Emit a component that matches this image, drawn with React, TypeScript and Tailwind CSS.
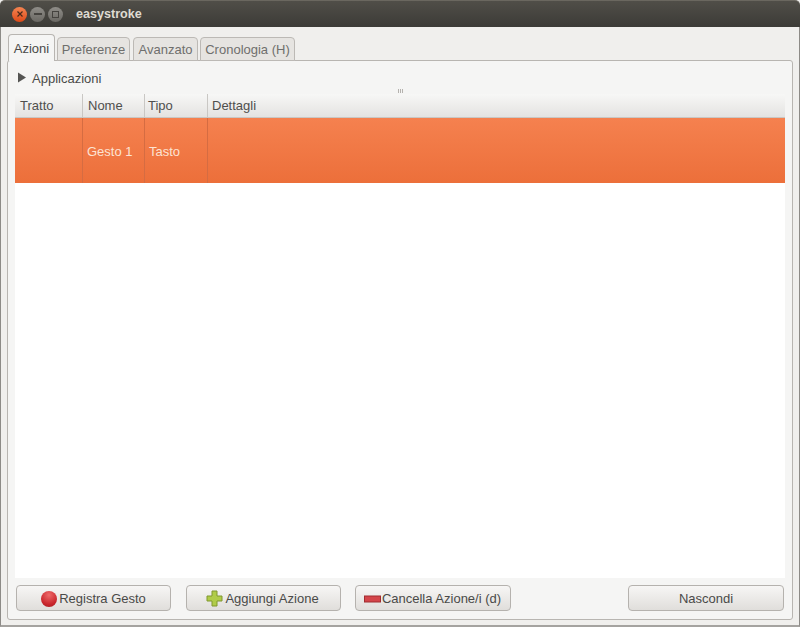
export default function App() {
  const font = "font-['Liberation_Sans',Arial,sans-serif]";
  const btn =
    "flex h-[26px] items-center justify-center rounded-[4px] border border-[#b5b2ae] bg-gradient-to-b from-[#f7f6f5] to-[#e0dedb] text-[13px] text-[#4a4a48]";
  return (
    <div className={`flex h-[627px] w-[800px] flex-col overflow-hidden bg-[#f0efed] ${font}`}>
      <div className="flex h-[27px] shrink-0 items-center rounded-t-[5px] border-t border-[#6a675f] bg-gradient-to-b from-[#504e48] to-[#3c3b37] pl-[12px]">
        <div className="flex h-[15px] w-[15px] items-center justify-center rounded-full bg-gradient-to-b from-[#f58450] to-[#dd4814]">
          <svg width="8" height="8" viewBox="0 0 8 8"><path d="M1.5 1.5l5 5M6.5 1.5l-5 5" stroke="#4a2a1a" strokeWidth="1.2" /></svg>
        </div>
        <div className="ml-[3px] flex h-[15px] w-[15px] items-center justify-center rounded-full bg-gradient-to-b from-[#8f8d88] to-[#6a6863]">
          <div className="h-[2px] w-[8px] bg-[#45433f]" />
        </div>
        <div className="ml-[3px] flex h-[15px] w-[15px] items-center justify-center rounded-full bg-gradient-to-b from-[#8f8d88] to-[#6a6863]">
          <div className="h-[7px] w-[7px] border border-[#45433f]" />
        </div>
        <div className="ml-[13px] text-[12.6px] font-bold text-[#dfdbd2]">easystroke</div>
      </div>
      <div className="flex min-h-0 flex-1 flex-col border-x border-b-2 border-x-[#8d8b87] border-b-[#a5a3a0] px-[6px] pt-[7px] pb-[5px]">
        <div className="z-10 -mb-px flex items-end pl-[1px] text-[13px]">
          <div className="flex h-[27px] w-[47px] items-center justify-center rounded-t-[4px] border border-b-0 border-[#b8b5b1] bg-[#f5f5f4] pt-[2px] text-[#4a4a48]">Azioni</div>
          <div className="ml-[2px] flex h-[24px] w-[73px] items-center justify-center rounded-t-[4px] border border-[#bcb9b5] bg-[#e6e4e1] pt-[2px] text-[#6f6f6d]">Preferenze</div>
          <div className="ml-[3px] flex h-[24px] w-[65px] items-center justify-center rounded-t-[4px] border border-[#bcb9b5] bg-[#e6e4e1] pt-[2px] text-[#6f6f6d]">Avanzato</div>
          <div className="ml-[2px] flex h-[24px] w-[95px] items-center justify-center rounded-t-[4px] border border-[#bcb9b5] bg-[#e6e4e1] pt-[2px] text-[#6f6f6d]">Cronologia (H)</div>
        </div>
        <div className="flex min-h-0 flex-1 flex-col rounded-[3px] border border-[#b8b5b1] bg-[#f5f5f4] px-[7px] pt-[9px] pb-[8px]">
          <div className="flex h-[17px] items-center pl-[3px] text-[13px] text-[#4a4a48]">
            <svg className="mb-[3px] -ml-[1px]" width="10" height="11" viewBox="0 0 10 11"><path d="M1 0.5L9 5.5L1 10.5Z" fill="#555553" /></svg>
            <span className="ml-[5px]">Applicazioni</span>
          </div>
          <div className="flex h-[7px] items-center justify-center gap-[1px]">
            <div className="h-[4px] w-px bg-[#b5b2ae]" />
            <div className="h-[4px] w-px bg-[#b5b2ae]" />
            <div className="h-[4px] w-px bg-[#b5b2ae]" />
          </div>
          <div className="flex min-h-0 flex-1 flex-col bg-white">
            <div className="flex h-[24px] shrink-0 border-b border-[#c9c7c4] bg-gradient-to-b from-[#f7f7f6] to-[#e4e3e1] text-[13px] text-[#4f4f4d]">
              <div className="flex w-[68px] items-center border-r border-[#c9c7c4] pt-[1px] pl-[5px]">Tratto</div>
              <div className="flex w-[62px] items-center border-r border-[#c9c7c4] pt-[1px] pl-[5px]">Nome</div>
              <div className="flex w-[63px] items-center border-r border-[#c9c7c4] pt-[1px] pl-[3px]">Tipo</div>
              <div className="flex flex-1 items-center pt-[1px] pl-[4px]">Dettagli</div>
            </div>
            <div className="flex h-[65px] shrink-0 bg-gradient-to-b from-[#f5814f] to-[#ec6f3a] text-[13px] text-[#fde3d3]">
              <div className="w-[68px] border-r border-[#d56c42]" />
              <div className="flex w-[62px] items-center border-r border-[#d56c42] pt-[2px] pl-[4px]">Gesto 1</div>
              <div className="flex w-[63px] items-center border-r border-[#d56c42] pt-[2px] pl-[4px]">Tasto</div>
              <div className="flex-1" />
            </div>
          </div>
          <div className="mt-[7px] flex shrink-0 px-[1px]">
            <div className={`${btn} w-[155px] gap-[2px] pt-[1px]`}>
              <div className="h-[16px] w-[16px] rounded-full bg-[radial-gradient(circle_at_50%_25%,#ee6a6a,#c9262c_65%,#a01a20)]" />
              <span>Registra Gesto</span>
            </div>
            <div className={`${btn} ml-[15px] w-[155px] gap-[2px] pt-[1px]`}>
              <svg className="-ml-[2px]" width="17" height="17" viewBox="0 0 17 17"><path d="M6 1h5v5h5v5h-5v5H6v-5H1V6h5z" fill="#b0cc48" stroke="#80982e" /></svg>
              <span>Aggiungi Azione</span>
            </div>
            <div className={`${btn} ml-[14px] w-[156px] gap-[1px] pt-[1px]`}>
              <svg className="-ml-[1px]" width="17" height="8" viewBox="0 0 17 8"><rect x="0.5" y="1" width="16" height="6" fill="#d4454a" stroke="#a02c30" /></svg>
              <span>Cancella Azione/i (d)</span>
            </div>
            <div className={`${btn} ml-auto w-[156px] pt-[1px]`}>Nascondi</div>
          </div>
        </div>
      </div>
    </div>
  );
}
